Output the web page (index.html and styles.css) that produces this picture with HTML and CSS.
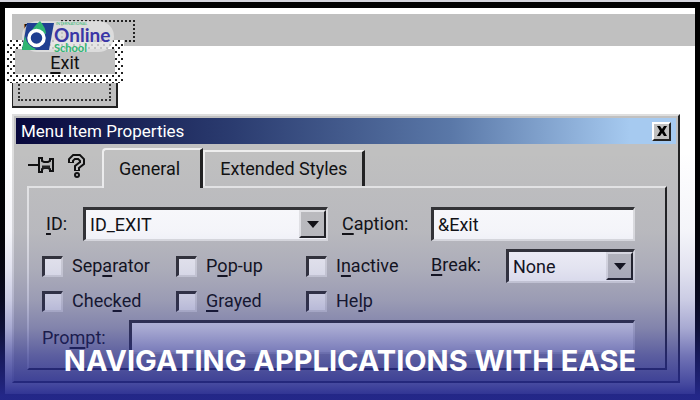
FILE: index.html
```html
<!DOCTYPE html>
<html lang="en">
<head>
<meta charset="utf-8">
<title>Navigating Applications with Ease</title>
<link rel="stylesheet" href="styles.css">
</head>
<body>
<main class="screen">
  <div class="desktop">
    <nav class="menubar"><a href="#file"><u>F</u>ile</a><span class="slot"></span></nav>
    <div class="popup"><button type="button"><u>E</u>xit</button></div>
    <div class="brand">
      <svg class="mark" viewBox="0 0 32 30" aria-hidden="true">
        <path d="M5 2H32L27 29H0Z" fill="#1f3f92"/>
        <path d="M18 0Q11 6 8 13L15 10L24 13Q24 7 18 0Z" fill="#2fb673"/>
        <path d="M0 28L3 15Q5 25 14 28L13 29H0Z" fill="#2fb673"/>
        <circle cx="14.500" cy="17" r="7.500" fill="#1f3f92" stroke="#fff" stroke-width="3.500"/>
      </svg>
      <div class="words"><small>INTERNATIONAL</small><b>Online</b><strong>School</strong></div>
    </div>
    <div class="ghost"><span></span></div>
    <section class="dialog">
      <header class="titlebar">
        <h2>Menu Item Properties</h2>
        <button type="button" aria-label="Close"><svg viewBox="0 0 12 10"><path d="M1 0H4L6 3L8 0H11L8 5L11 10H8L6 7L4 10H1L4 5Z"/></svg></button>
      </header>
      <div class="tabs">
        <svg class="pin" viewBox="0 0 26 18" aria-hidden="true"><path d="M0 9H11" stroke="#111" stroke-width="2"/><path d="M11 2H14V5L16 6H20L22 5V3H25V15H22V13L20 12H16L14 13V16H11Z" fill="#bbb" stroke="#111" stroke-width="2"/><path d="M14 11H22" stroke="#222" stroke-width="3"/></svg>
        <svg class="help" viewBox="0 0 18 24" aria-hidden="true"><path d="M3 9V6L6 3H11L14 6V9L9 13V17" fill="none" stroke="#111" stroke-width="6"/><circle cx="9" cy="21" r="3" fill="#111"/><path d="M3 8V6L6 3H11L14 6V9L9 13V16" fill="none" stroke="#c4c4c4" stroke-width="2"/><circle cx="9" cy="21" r="1" fill="#c4c4c4"/></svg>
        <button type="button" class="tab active">General</button>
        <button type="button" class="tab">Extended Styles</button>
      </div>
      <form class="panel">
        <div class="row ids">
          <label for="id"><u>I</u>D:</label>
          <div class="combo wide"><select id="id"><option>ID_EXIT</option></select><i></i></div>
          <label for="caption" class="mid"><u>C</u>aption:</label>
          <input class="field" id="caption" type="text" value="&amp;Exit">
        </div>
        <div class="row options">
          <div class="checks">
            <label><input type="checkbox">Sep<u>a</u>rator</label>
            <label><input type="checkbox">P<u>o</u>p-up</label>
            <label><input type="checkbox">I<u>n</u>active</label>
            <label><input type="checkbox">Chec<u>k</u>ed</label>
            <label><input type="checkbox"><u>G</u>rayed</label>
            <label><input type="checkbox">He<u>l</u>p</label>
          </div>
          <label for="break" class="break"><u>B</u>reak:</label>
          <div class="combo"><select id="break"><option>None</option></select><i></i></div>
        </div>
        <div class="row prompt">
          <label for="prompt">Pro<u>m</u>pt:</label>
          <input class="field" id="prompt" type="text">
        </div>
      </form>
    </section>
  </div>
  <h1>NAVIGATING APPLICATIONS WITH EASE</h1>
</main>
</body>
</html>
```
FILE: styles.css
```css
* { box-sizing: border-box; }
body {
  margin: 0;
  font: 18px/22px Roboto, "Liberation Sans", sans-serif;
  color: #111;
  background: #fff;
}
button, input, select { font: inherit; color: inherit; border-radius: 0; }
u { text-decoration-thickness: 2px; text-underline-offset: 3px; }

.screen {
  position: relative;
  min-height: 100vh;
  padding: 2px 0 1px;
  background: #d4d4dc;
}
.screen::after {
  content: "";
  position: absolute;
  inset: 0 0 1px;
  pointer-events: none;
  background: linear-gradient(rgba(37, 41, 142, 0) 38%, rgba(37, 41, 142, .05) 58%, rgba(37, 41, 142, .13) 67%, rgba(37, 41, 142, .24) 75%, rgba(37, 41, 142, .4) 82%, rgba(37, 41, 142, .65) 89%, rgba(37, 41, 142, .85) 96%, rgba(37, 41, 142, .96) 99%);
}
.desktop {
  position: relative;
  padding: 6px 0 11px 7px;
  border: solid #000;
  border-width: 6px 5px;
  background: #fff;
}

.menubar {
  display: flex;
  gap: 10px;
  height: 32px;
  padding: 6px 11px;
  background: #c0c0c0;
}
.menubar a { color: inherit; text-decoration: none; }
.slot { width: 74px; height: 22px; border: 2px dotted #222; }
.popup {
  position: absolute;
  top: 32px;
  left: 1px;
  padding: 9px;
  background:
    radial-gradient(circle at 2px 2px, #222 1px, transparent 1px) 0 3px / 6px 7px,
    radial-gradient(circle at 5px 5px, #222 1px, transparent 1px) 0 3px / 6px 7px,
    #fff;
}
.popup button {
  display: block;
  width: 100px;
  height: 25px;
  padding: 2px 0 0;
  border: 0;
  background: #c0c0c0;
}
.ghost {
  width: 106px;
  height: 62px;
  padding: 3px 5px 5px;
  border: solid #222;
  border-width: 0 2px 2px 1px;
  background: #c0c0c0;
}
.ghost span { display: block; height: 100%; border: 2px dotted #333; }

.brand {
  position: absolute;
  top: 13px;
  left: 17px;
  display: flex;
  width: 92px;
  height: 31px;
  border-radius: 16px;
  background: rgba(225, 225, 225, .85);
}
.mark { width: 32px; height: 30px; }
.words { display: flex; flex-direction: column; font-family: Lato, sans-serif; }
.words small { font-size: 4px; line-height: 6px; padding-left: 2px; color: #2fb673; }
.words b { font-size: 19px; line-height: 16px; color: #3a36a6; }
.words strong { font-size: 11px; line-height: 9px; color: #2fb673; }

.dialog {
  margin: 6px 15px 0 0;
  padding: 2px 2px 11px;
  border: solid;
  border-width: 2px;
  border-color: #dedede #222 #222 #dedede;
  background: #c0c0c0;
}
.titlebar {
  display: flex;
  justify-content: space-between;
  align-items: center;
  height: 26px;
  padding: 0 5px;
  color: #fff;
  background: linear-gradient(90deg, #08083c, #2b3c70 33%, #5a78a8 66%, #a6caf0 93%);
}
.titlebar h2 { margin: 0; font-size: 17px; font-weight: 400; }
.titlebar button {
  display: grid;
  place-items: center;
  width: 19px;
  height: 19px;
  padding: 0;
  border: 2px solid;
  border-color: #fff #222 #222 #fff;
  background: #c0c0c0;
}
.titlebar svg { width: 12px; height: 10px; }

.tabs { display: flex; align-items: flex-end; height: 42px; padding-left: 12px; }
.pin { width: 26px; height: 18px; margin: 0 14px 12px 0; }
.help { width: 18px; height: 24px; margin: 0 16px 8px 0; }
.tab {
  height: 36px;
  padding: 0 15px;
  border: solid;
  border-width: 2px 3px 0 2px;
  border-color: #eee #222 #eee #eee;
  background: none;
}
.tab.active {
  position: relative;
  height: 40px;
  margin-bottom: -2px;
  padding: 0 20px 0 15px;
  border-radius: 4px 0 0;
  background: #c0c0c0;
}

.panel {
  margin: 0 9px 0 11px;
  padding: 19px 30px 14px 13px;
  border: 2px solid;
  border-color: #e6e6e6 #222 #222 #e6e6e6;
}
.row { display: flex; }
.ids { align-items: center; }
.ids > label:first-child { width: 41px; padding-left: 4px; }
.mid { width: 103px; padding-left: 14px; }
.combo {
  position: relative;
  flex: 1;
  height: 34px;
}
.combo.wide { flex: 245; }
.ids .field { flex: 191; }
.field, .combo select {
  appearance: none;
  width: 100%;
  min-width: 0;
  height: 34px;
  margin: 0;
  padding: 0 4px;
  border: solid;
  border-width: 3px 2px 2px 3px;
  border-color: #333 #e2e2e2 #e2e2e2 #333;
  background: #fff;
}
.combo i {
  position: absolute;
  top: 3px;
  right: 2px;
  display: grid;
  place-items: center;
  width: 27px;
  height: 28px;
  border: 2px solid;
  border-color: #e8e8e8 #222 #222 #e8e8e8;
  background: #c0c0c0;
  pointer-events: none;
}
.combo i::after {
  content: "";
  border: solid transparent;
  border-width: 7px 6px 0;
  border-top-color: #111;
}
.options { margin-top: 8px; }
.checks {
  display: grid;
  grid-template-columns: 134px 130px 125px;
  row-gap: 13px;
  margin-top: 6px;
}
.checks label { display: flex; align-items: center; height: 22px; white-space: pre; }
.checks input {
  appearance: none;
  width: 21px;
  height: 21px;
  margin: 0 9px 0 0;
  border: solid;
  border-width: 3px 2px 2px 3px;
  border-color: #333 #ddd #ddd #333;
  background: #f6f6f6;
}
.break { width: 75px; padding-top: 5px; }
.prompt { margin-top: 8px; }
.prompt label { width: 87px; padding-top: 7px; }
.prompt .field { flex: 1; }

h1 {
  position: absolute;
  z-index: 1;
  right: 0;
  bottom: 22px;
  left: 0;
  margin: 0;
  font: 700 29px/36px Inter, sans-serif;
  text-align: center;
  color: #fff;
}
```
